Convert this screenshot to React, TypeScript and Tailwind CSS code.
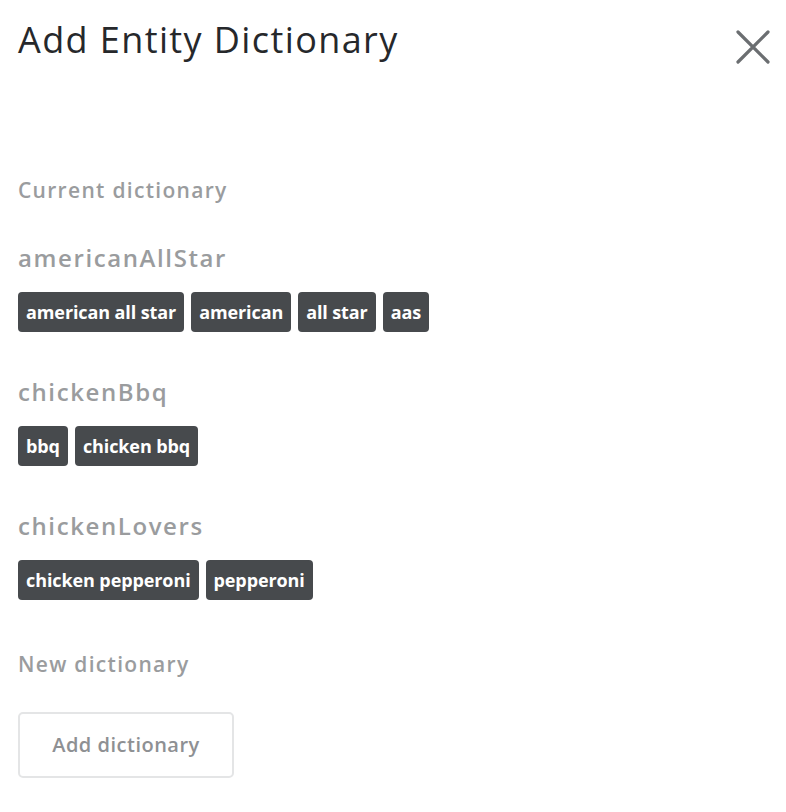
import { useState } from 'react';

const dictionaries = [
  { name: 'americanAllStar', synonyms: ['american all star', 'american', 'all star', 'aas'] },
  { name: 'chickenBbq', synonyms: ['bbq', 'chicken bbq'] },
  { name: 'chickenLovers', synonyms: ['chicken pepperoni', 'pepperoni'] },
];

function CloseIcon() {
  return (
    <svg width="34" height="34" viewBox="0 0 34 34" fill="none" stroke="#6b6e71" strokeWidth={3.2} strokeLinecap="round">
      <path d="M2 2L32 32M32 2L2 32" />
    </svg>
  );
}

export default function App() {
  const [open, setOpen] = useState(true);
  if (!open) return null;

  return (
    <div className="w-[786px] h-[812px] bg-white font-['Open_Sans','Liberation_Sans',sans-serif] px-[18px] pt-[16px]">
      <div className="flex items-start justify-between">
        <h1 className="text-[36px] leading-[48px] text-[#26282b] font-normal tracking-[1.4px]">Add Entity Dictionary</h1>
        <button onClick={() => setOpen(false)} className="mt-[14px] mr-[-2px] p-0" aria-label="Close">
          <CloseIcon />
        </button>
      </div>

      <h2 className="mt-[112px] text-[21px] leading-[28px] font-semibold text-[#9a9c9e] tracking-[1.3px]">Current dictionary</h2>

      <div className="mt-[38px] flex flex-col gap-[44px]">
        {dictionaries.map(d => (
          <div key={d.name}>
            <h3 className="text-[24px] leading-[32px] font-semibold text-[#9a9c9e] tracking-[1.6px]">{d.name}</h3>
            <div className="mt-[18px] flex flex-wrap gap-[7px]">
              {d.synonyms.map(s => (
                <span
                  key={s}
                  className="h-[40px] px-[8px] rounded-[4px] bg-[#474a4d] text-white text-[18px] font-bold tracking-[-0.1px] flex items-center"
                >
                  {s}
                </span>
              ))}
            </div>
          </div>
        ))}
      </div>

      <h2 className="mt-[50px] text-[21px] leading-[28px] font-semibold text-[#9a9c9e] tracking-[1.3px]">New dictionary</h2>

      <button className="mt-[34px] w-[216px] h-[66px] rounded-[5px] border-2 border-[#e4e5e6] bg-white text-[20px] font-semibold text-[#8e9093] tracking-[0.5px]">
        Add dictionary
      </button>
    </div>
  );
}
